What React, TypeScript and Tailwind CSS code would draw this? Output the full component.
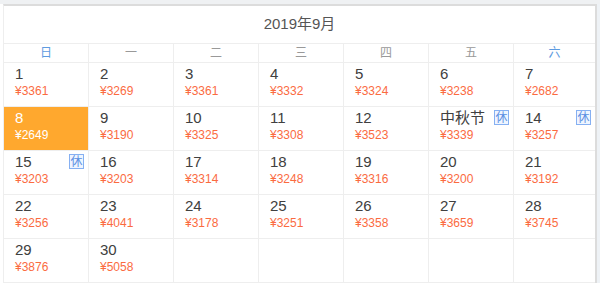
import React from 'react';

type Day = { label: string; price: string; rest?: boolean; active?: boolean };

const weekNames = ['日', '一', '二', '三', '四', '五', '六'];

const prices: Record<number, string> = {
  1: '3361', 2: '3269', 3: '3361', 4: '3332', 5: '3324', 6: '3238', 7: '2682',
  8: '2649', 9: '3190', 10: '3325', 11: '3308', 12: '3523', 13: '3339', 14: '3257',
  15: '3203', 16: '3203', 17: '3314', 18: '3248', 19: '3316', 20: '3200', 21: '3192',
  22: '3256', 23: '4041', 24: '3178', 25: '3251', 26: '3358', 27: '3659', 28: '3745',
  29: '3876', 30: '5058',
};

const days: (Day | null)[] = [];
for (let d = 1; d <= 30; d++) {
  days.push({
    label: d === 13 ? '中秋节' : String(d),
    price: prices[d],
    rest: d === 13 || d === 14 || d === 15,
    active: d === 8,
  });
}
while (days.length < 35) days.push(null);

const font = { fontFamily: '"Liberation Sans", "Noto Sans CJK SC", sans-serif' };

const Cell: React.FC<{ day: Day | null; last: boolean }> = ({ day, last }) => (
  <div
    className={`relative h-[44px] border-b border-[#eeeeee] pl-[11px] pt-[2px] ${
      last ? '' : 'border-r'
    } ${day?.active ? 'bg-[#ffa82e]' : 'bg-white'}`}
  >
    {day && (
      <>
        <div className={`text-[15px] leading-[18px] ${day.active ? 'text-white' : 'text-[#404040]'}`}>
          {day.label}
        </div>
        <div className={`mt-[1px] text-[12px] leading-[14px] ${day.active ? 'text-white' : 'text-[#fb6b3f]'}`}>
          ¥{day.price}
        </div>
        {day.rest && (
          <span className="absolute right-[4px] top-[3px] flex h-[15px] w-[15px] items-center justify-center border border-[#86b0f2] bg-[#eef5ff] text-[12px] leading-none text-[#5b8fe2]">
            休
          </span>
        )}
      </>
    )}
  </div>
);

export default function App() {
  return (
    <div className="w-[600px] h-[286px] overflow-hidden bg-white" style={font}>
      <div className="h-[4px] bg-[#eff1f3]" />
      <div className="flex">
        <div className="ml-[3px] w-[594px] border-t-2 border-r-2 border-l border-t-[#dcdcdc] border-r-[#dcdcdc] border-l-[#eeeeee] bg-white">
          <div className="flex h-[38px] items-center justify-center border-b border-[#eeeeee] text-[15px] text-[#555555]">
            2019年9月
          </div>
          <div className="grid grid-cols-[repeat(6,85px)_1fr]">
            {weekNames.map((w, i) => (
              <div
                key={w}
                className={`flex h-[19px] items-center justify-center border-b border-[#eeeeee] text-[12px] ${
                  i < 6 ? 'border-r' : ''
                } ${i === 0 || i === 6 ? 'text-[#5e9be0]' : 'text-[#999999]'}`}
              >
                {w}
              </div>
            ))}
            {days.map((d, i) => (
              <Cell key={i} day={d} last={i % 7 === 6} />
            ))}
          </div>
        </div>
        <div className="flex-1 bg-[#eef2f6]" />
      </div>
    </div>
  );
}
